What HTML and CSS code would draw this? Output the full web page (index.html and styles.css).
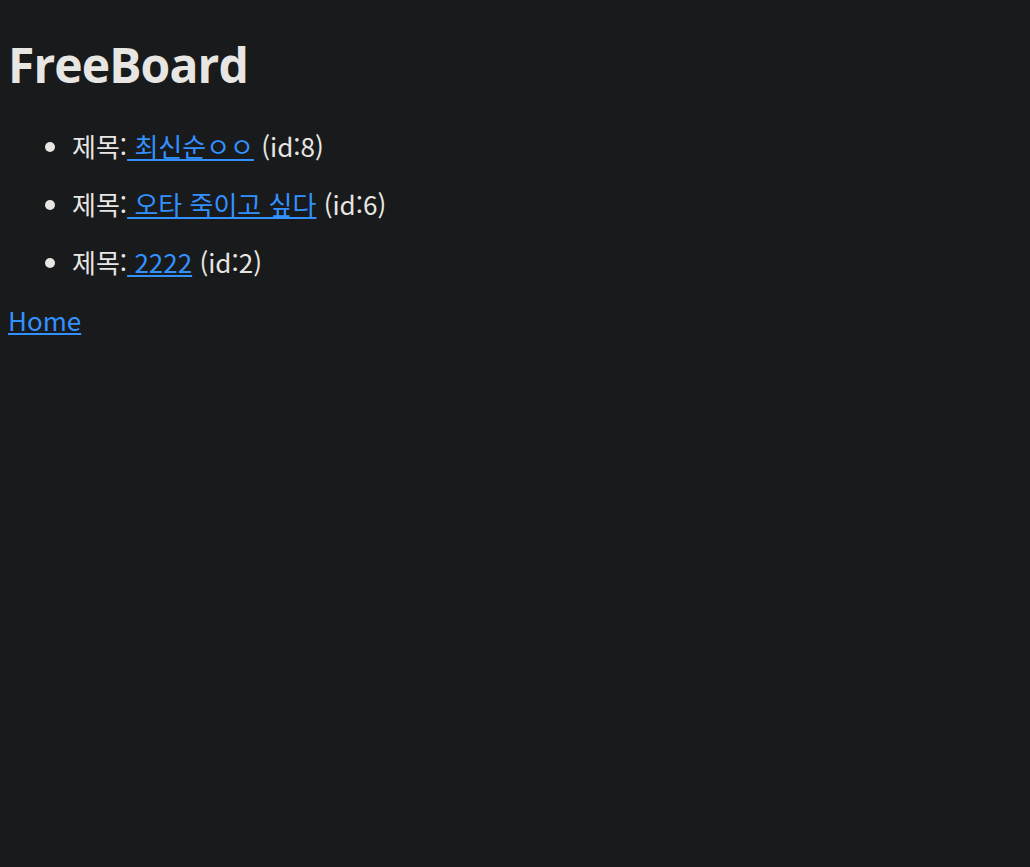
FILE: index.html
```html
<!DOCTYPE html>
<html lang="ko">
<head>
<meta charset="utf-8">
<title>FreeBoard</title>
<link rel="stylesheet" href="styles.css">
</head>
<body>
<h1 class="title">FreeBoard</h1>
<ul class="posts">
  <li class="post">제목:<a class="link" href="#"> 최신순ㅇㅇ</a> (id:8)</li>
  <li class="post">제목:<a class="link" href="#"> 오타 죽이고 싶다</a> (id:6)</li>
  <li class="post">제목:<a class="link" href="#"> 2222</a> (id:2)</li>
</ul>
<a class="link" href="#">Home</a>
</body>
</html>
```
FILE: styles.css
```css
html {
  background: #181a1b;
}
body {
  margin: 8px;
  color: #e8e6e3;
  font-family: "Noto Sans CJK KR", "Open Sans", sans-serif;
  font-size: 26px;
  line-height: 32px;
}
.title {
  font-family: "Open Sans", "Noto Sans CJK KR", sans-serif;
  font-size: 48px;
  line-height: 64px;
  font-weight: 700;
  margin: 25px 0 33px;
  letter-spacing: -0.9px;
}
.posts {
  margin: 0;
  padding-left: 64px;
}
.post {
  margin-bottom: 26px;
}
.link {
  color: #3391ff;
}
```
